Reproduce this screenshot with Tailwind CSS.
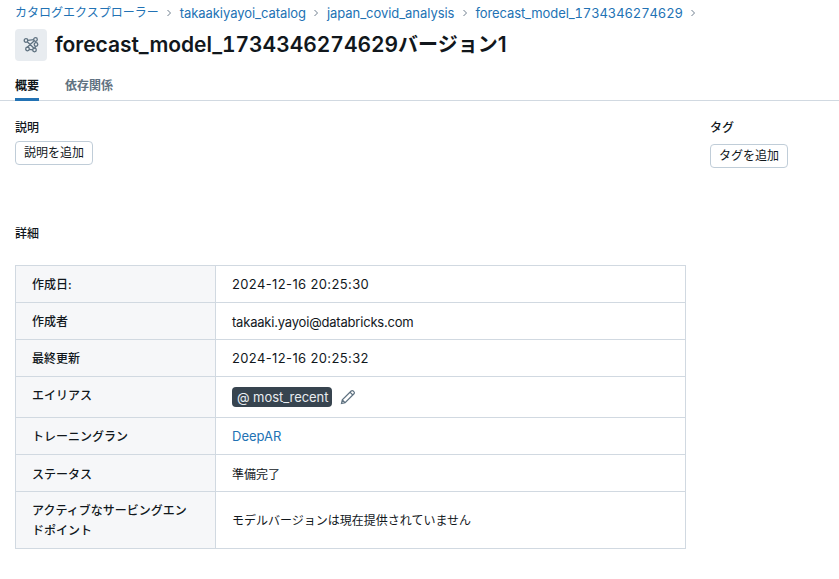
<!DOCTYPE html>
<html lang="ja">
<head>
<meta charset="utf-8">
<script src="https://cdn.jsdelivr.net/npm/@tailwindcss/browser@4"></script>
</head>
<body class="bg-white font-['Inter','Noto_Sans_CJK_JP',sans-serif] text-[13px] leading-5 text-[#11171c] overflow-hidden">
<div class="w-[839px] h-[579px] overflow-hidden">
  <nav class="flex items-center pl-[15px] pt-[3px] h-[23px] text-[#2272b4]">
    <a class="text-[12px]">カタログエクスプローラー</a>
    <span class="w-[21px] flex justify-center text-[#6f7f8f]"><svg width="8" height="8" viewBox="0 0 8 8" fill="none" stroke="currentColor" stroke-width="1"><path d="M2.5 1l3 3-3 3"/></svg></span>
    <a class="tracking-[-0.05px]">takaakiyayoi_catalog</a>
    <span class="w-[21px] flex justify-center text-[#6f7f8f]"><svg width="8" height="8" viewBox="0 0 8 8" fill="none" stroke="currentColor" stroke-width="1"><path d="M2.5 1l3 3-3 3"/></svg></span>
    <a class="tracking-[-0.05px]">japan_covid_analysis</a>
    <span class="w-[21px] flex justify-center text-[#6f7f8f]"><svg width="8" height="8" viewBox="0 0 8 8" fill="none" stroke="currentColor" stroke-width="1"><path d="M2.5 1l3 3-3 3"/></svg></span>
    <a class="tabular-nums tracking-[-0.1px]">forecast_model_1734346274629</a>
    <span class="w-[21px] flex justify-center text-[#6f7f8f]"><svg width="8" height="8" viewBox="0 0 8 8" fill="none" stroke="currentColor" stroke-width="1"><path d="M2.5 1l3 3-3 3"/></svg></span>
  </nav>
  <div class="flex items-center gap-2 pl-[15px] mt-[6px] h-8">
    <span class="w-8 h-8 rounded bg-[#e8ecf0] flex items-center justify-center text-[#5f7281]">
      <svg width="16" height="16" viewBox="0 0 16 16" fill="none" stroke="currentColor" stroke-width="1.3"><circle cx="3" cy="3.5" r="1.8"/><circle cx="12.5" cy="2.5" r="1.8"/><circle cx="13" cy="7.5" r="1.8"/><circle cx="11.5" cy="13" r="1.8"/><circle cx="4.5" cy="12" r="1.8"/><path d="M4.7 3.3l6.1-.7M4.3 4.7l7.2 7M4 10.5L11.3 3.8M6.1 12.3l3.7.5M12.7 4.2l.1 1.6M12.6 9.2l-.7 2.1"/></svg>
    </span>
    <h1 class="text-[21px] leading-8 font-semibold"><span class="tabular-nums tracking-[-0.04px]">forecast_model_1734346274629</span><span class="text-[20px]">バージョン</span>1</h1>
  </div>
  <div class="flex gap-[26px] px-[15px] mt-[13px] h-[26px] border-b border-[#d1d9e1] box-content">
    <span class="h-[27px] pt-[2px] border-b-[3px] border-[#2272b4] font-semibold text-[12px]">概要</span>
    <span class="h-[27px] pt-[2px] font-semibold text-[12px] text-[#5f7281]">依存関係</span>
  </div>
  <div class="flex mt-[17px] pl-[15px]">
    <div class="w-[695px]">
      <h3 class="text-[12px] leading-5 font-medium">説明</h3>
      <button class="mt-[3px] h-6 px-2 border border-[#c0cdd8] rounded text-[12px] leading-5 bg-white">説明を追加</button>
    </div>
    <div>
      <h3 class="text-[12px] leading-5 font-medium">タグ</h3>
      <button class="mt-[6px] h-6 px-2 border border-[#c0cdd8] rounded text-[12px] leading-5 bg-white">タグを追加</button>
    </div>
  </div>
  <h3 class="ml-[15px] mt-[56px] text-[12px] leading-5 font-medium">詳細</h3>
  <table class="ml-[15px] mt-[21px] w-[671px] border-collapse table-fixed">
    <colgroup><col class="w-[200px]"><col></colgroup>
    <tbody>
      <tr class="h-[37px]"><th class="border border-[#d1d9e1] bg-[#f6f7f9] px-4 pt-[2px] text-left align-middle text-[12px] font-medium">作成日:</th><td class="border border-[#d1d9e1] px-4 tracking-[0.37px]">2024-12-16 20:25:30</td></tr>
      <tr class="h-[37px]"><th class="border border-[#d1d9e1] bg-[#f6f7f9] px-4 pt-[2px] text-left align-middle text-[12px] font-medium">作成者</th><td class="border border-[#d1d9e1] px-4 pt-[1px] tracking-[-0.2px]">takaaki.yayoi@databricks.com</td></tr>
      <tr class="h-[37px]"><th class="border border-[#d1d9e1] bg-[#f6f7f9] px-4 pt-[2px] text-left align-middle text-[12px] font-medium">最終更新</th><td class="border border-[#d1d9e1] px-4 tracking-[0.37px]">2024-12-16 20:25:32</td></tr>
      <tr class="h-[41px]"><th class="border border-[#d1d9e1] bg-[#f6f7f9] px-4 pb-[2px] text-left align-middle text-[12px] font-medium">エイリアス</th><td class="border border-[#d1d9e1] px-4">
        <div class="flex items-center gap-2">
          <span class="inline-flex items-center h-5 pl-[5px] pr-[4px] rounded bg-[#37444f] text-[#e8ecf0] tracking-[-0.05px]">@ most_recent</span>
          <svg class="text-[#5f7281]" width="16" height="16" viewBox="0 0 16 16" fill="none" stroke="currentColor" stroke-width="1.2"><path d="M1.5 14.5l.8-3.6L11.2 2a1.4 1.4 0 0 1 2 0l.8.8a1.4 1.4 0 0 1 0 2L5.1 13.7l-3.6.8zM2.3 10.9l2.8 2.8M10 3.2l2.8 2.8"/></svg>
        </div>
      </td></tr>
      <tr class="h-[37px]"><th class="border border-[#d1d9e1] bg-[#f6f7f9] px-4 pt-[2px] text-left align-middle text-[12px] font-medium">トレーニングラン</th><td class="border border-[#d1d9e1] px-4 text-[#2272b4]">DeepAR</td></tr>
      <tr class="h-[37px]"><th class="border border-[#d1d9e1] bg-[#f6f7f9] px-4 pt-[4px] text-left align-middle text-[12px] font-medium">ステータス</th><td class="border border-[#d1d9e1] px-4 pt-[3px] text-[12px]">準備完了</td></tr>
      <tr class="h-[57px]"><th class="border border-[#d1d9e1] bg-[#f6f7f9] px-4 pt-[2px] text-left align-middle text-[12px] leading-[20px] font-medium">アクティブなサービングエン<br>ドポイント</th><td class="border border-[#d1d9e1] px-4 pt-[1px] text-[12px]">モデルバージョンは現在提供されていません</td></tr>
    </tbody>
  </table>
</div>
</body>
</html>
